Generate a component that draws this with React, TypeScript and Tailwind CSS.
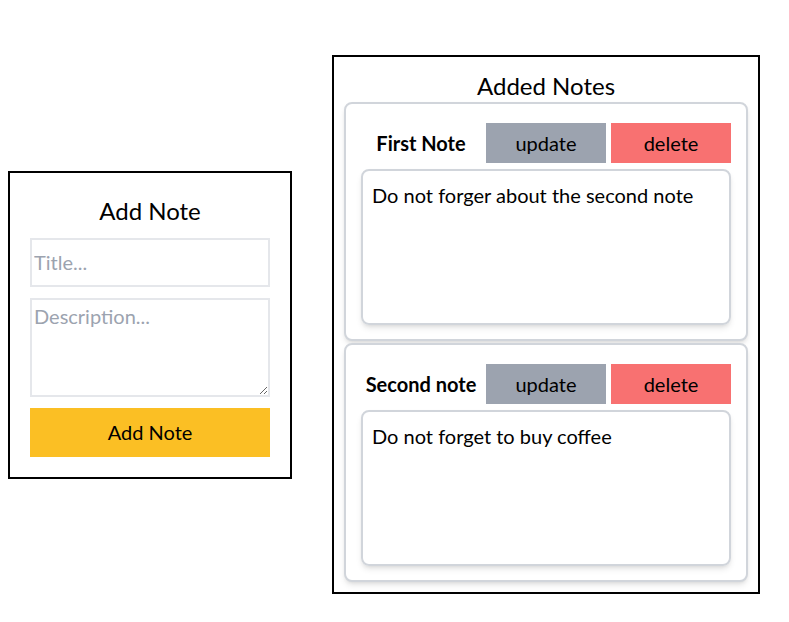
import React, { useState } from 'react';

// ============================================================================
// Types
// ============================================================================

interface Note {
  id: number;
  title: string;
  description: string;
}

const FONT = { fontFamily: 'Lato, "Noto Sans", sans-serif' };

// ============================================================================
// Components
// ============================================================================

function AddNoteForm() {
  return (
    <div className="w-[284px] border-2 border-black bg-white px-5 pt-[22px] pb-5">
      <h2 className="mb-[11px] text-center text-2xl leading-8 text-black">Add Note</h2>
      <input
        className="mb-[11px] block h-[49px] w-full border-2 border-[#e5e7eb] px-0.5 text-xl outline-none placeholder:text-[#9ca3af]"
        placeholder="Title..."
      />
      <textarea
        className="mb-[11px] block h-[99px] w-full border-2 border-[#e5e7eb] px-0.5 py-0.5 text-xl outline-none placeholder:text-[#9ca3af]"
        placeholder="Description..."
      />
      <button className="block h-[49px] w-full bg-[#fbbf24] text-xl text-black">Add Note</button>
    </div>
  );
}

function NoteCard({ note }: { note: Note }) {
  return (
    <div className="rounded-lg border-2 border-[#d1d5db] bg-white px-[15px] pt-[19px] pb-[14px] shadow-md">
      <div className="grid h-10 grid-cols-3 gap-[5px]">
        <div className="flex items-center justify-center text-xl font-bold text-black">{note.title}</div>
        <button className="bg-[#9ca3af] text-xl text-black">update</button>
        <button className="bg-[#f87171] text-xl text-black">delete</button>
      </div>
      <div className="mt-[6px] h-[156px] rounded-lg border-2 border-[#d1d5db] px-[9px] pt-[10px] text-xl text-black shadow-md">
        {note.description}
      </div>
    </div>
  );
}

// ============================================================================
// Page
// ============================================================================

export default function App() {
  const [notes] = useState<Note[]>([
    { id: 1, title: 'First Note', description: 'Do not forger about the second note' },
    { id: 2, title: 'Second note', description: 'Do not forget to buy coffee' },
  ]);

  return (
    <div className="flex items-center gap-10 bg-white pt-[55px] pl-2" style={FONT}>
      <AddNoteForm />

      <div className="w-[428px] border-2 border-black bg-white px-2.5 pt-[13px] pb-2.5">
        <h2 className="text-center text-2xl leading-8 text-black">Added Notes</h2>
        <div className="flex flex-col gap-0.5">
          {notes.map((note) => (
            <NoteCard key={note.id} note={note} />
          ))}
        </div>
      </div>
    </div>
  );
}
